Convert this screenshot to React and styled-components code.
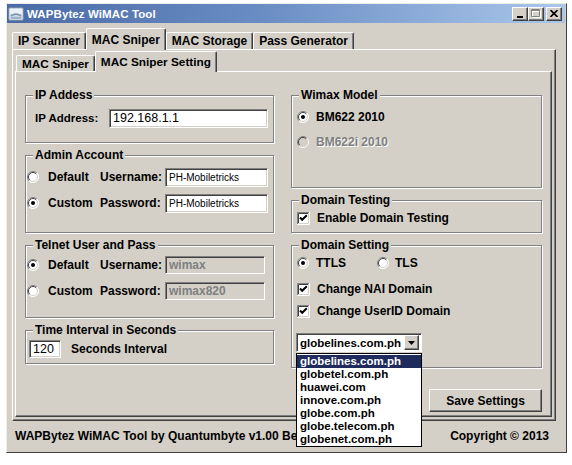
import React from "react";
import styled, { createGlobalStyle } from "styled-components";

const GlobalStyle = createGlobalStyle`
  body {
    margin: 0;
    background: #ffffff;
    font-family: "Liberation Sans", Arial, sans-serif;
    color: #000;
  }
`;

const FACE = "#d4d0c8";

// ---------- window frame ----------
const Window = styled.div`
  margin: 3px 0 0 6px;
  width: 561px;
  height: 450px;
  box-sizing: border-box;
  display: flex;
  flex-direction: column;
  background: ${FACE};
  border: 1px solid;
  border-color: #eeece6 #404040 #404040 #eeece6;
  padding: 0 1px 1px 0;
`;

const TitleBar = styled.div`
  height: 19px;
  flex-shrink: 0;
  display: flex;
  align-items: center;
  padding: 0 3px 0 1px;
  background: linear-gradient(90deg, #4a6ba6 0%, #6a8cc4 45%, #aac7ea 100%);
`;

const TitleText = styled.span`
  margin-left: 3px;
  color: #fff;
  font-weight: bold;
  font-size: 11.5px;
  letter-spacing: 0.1px;
`;

const CaptionButtons = styled.div`
  margin-left: auto;
  display: flex;
  align-items: center;
`;

const CaptionButton = styled.div`
  width: 16px;
  height: 14px;
  box-sizing: border-box;
  margin-left: ${(p) => (p.$gap ? "2px" : "0")};
  background: ${FACE};
  border: 1px solid;
  border-color: #fff #404040 #404040 #fff;
  box-shadow: inset -1px -1px 0 #808080;
  display: flex;
  align-items: center;
  justify-content: center;
`;

// ---------- tabs ----------
const Body = styled.div`
  padding: 5px 0 0 5px;
`;

const TabStrip = styled.div`
  display: flex;
  align-items: flex-end;
  height: ${(p) => (p.$inner ? "20px" : "21px")};
  padding-left: ${(p) => (p.$inner ? "1px" : "0")};
`;

const Tab = styled.div`
  position: relative;
  z-index: ${(p) => (p.$active ? 2 : 1)};
  box-sizing: border-box;
  height: ${(p) => (p.$active ? p.$tall : p.$short)}px;
  margin-bottom: ${(p) => (p.$active ? "-1px" : "0")};
  padding: 0 5px;
  display: flex;
  align-items: center;
  background: ${FACE};
  border-top: 1px solid #fff;
  border-left: 1px solid #fff;
  border-right: 1px solid #404040;
  box-shadow: inset -1px 0 0 #808080;
  border-radius: 2px 2px 0 0;
  font-weight: bold;
  font-size: ${(p) => p.$size}px;
  white-space: nowrap;
`;

const TabPanel = styled.div`
  width: 544px;
  height: 372px;
  box-sizing: border-box;
  display: flex;
  flex-direction: column;
  padding: 1px 3px 3px 2px;
  border: 1px solid;
  border-color: #fff #404040 #404040 #fff;
  box-shadow: inset -1px -1px 0 #808080;
`;

const SettingsPanel = styled.div`
  flex: 1;
  box-sizing: border-box;
  display: grid;
  grid-template-columns: 249px 251px;
  column-gap: 17px;
  align-content: start;
  padding: 16px 0 0 9px;
  border: 1px solid;
  border-color: #fff #404040 #404040 #fff;
  box-shadow: inset -1px -1px 0 #808080;
`;

const Column = styled.div`
  display: flex;
  flex-direction: column;
  gap: 5px;
`;

// ---------- group boxes ----------
const Group = styled.fieldset`
  margin: 0;
  min-width: 0;
  height: ${(p) => p.$h}px;
  box-sizing: border-box;
  padding: 0 2px;
  border: 1px solid #808080;
  box-shadow: inset 1px 1px 0 #fff, 1px 1px 0 #fff;
`;

const Legend = styled.legend`
  margin-left: 5px;
  padding: 0 2px;
  background: ${FACE};
  font-weight: bold;
  font-size: 12px;
  line-height: 14px;
`;

const Row = styled.div`
  display: flex;
  align-items: center;
  height: ${(p) => p.$h || 26}px;
  margin-top: ${(p) => p.$mt || 0}px;
  margin-left: ${(p) => p.$ml || 0}px;
`;

const Option = styled.label`
  display: flex;
  align-items: center;
  gap: ${(p) => p.$gap || 9}px;
  width: ${(p) => (p.$w ? `${p.$w}px` : "auto")};
  flex-shrink: 0;
  font-weight: bold;
  font-size: 12px;
  color: ${(p) => (p.$disabled ? "#808080" : "#000")};
  text-shadow: ${(p) => (p.$disabled ? "1px 1px 0 #fff" : "none")};
`;

const Caption = styled.span`
  width: ${(p) => p.$w}px;
  margin-left: ${(p) => p.$ml || 0}px;
  flex-shrink: 0;
  font-weight: bold;
  font-size: ${(p) => p.$size || 12}px;
`;

const Field = styled.input`
  width: ${(p) => p.$w}px;
  height: ${(p) => p.$h || 19}px;
  box-sizing: border-box;
  margin: 0;
  padding: 0 3px;
  outline: none;
  font-family: "Liberation Sans", Arial, sans-serif;
  font-size: ${(p) => p.$size || 12}px;
  font-weight: ${(p) => (p.$bold ? "bold" : "normal")};
  color: ${(p) => (p.disabled ? "#808080" : "#000")};
  background: ${(p) => (p.disabled ? FACE : "#fff")};
  border: 1px solid;
  border-color: #808080 #fff #fff #808080;
  box-shadow: inset 1px 1px 0 #404040, inset -1px -1px 0 ${FACE};
`;

const Button = styled.div`
  align-self: flex-end;
  width: 113px;
  height: 23px;
  margin-top: 16px;
  box-sizing: border-box;
  display: flex;
  align-items: center;
  justify-content: center;
  border: 1px solid;
  border-color: #fff #404040 #404040 #fff;
  box-shadow: inset -1px -1px 0 #808080;
  font-weight: bold;
  font-size: 12px;
`;

// ---------- combo box ----------
const ComboWrap = styled.div`
  position: relative;
  margin: 11px 0 0 2px;
  width: 126px;
`;

const Combo = styled.div`
  height: 19px;
  box-sizing: border-box;
  display: flex;
  align-items: center;
  background: #fff;
  border: 1px solid;
  border-color: #808080 #fff #fff #808080;
  box-shadow: inset 1px 1px 0 #404040;
  padding: 2px 2px 2px 3px;
  font-weight: bold;
  font-size: 11.5px;
`;

const ComboText = styled.span`
  flex: 1;
  white-space: nowrap;
  overflow: hidden;
`;

const ComboArrow = styled.span`
  width: 15px;
  height: 15px;
  flex-shrink: 0;
  box-sizing: border-box;
  display: flex;
  align-items: center;
  justify-content: center;
  background: ${FACE};
  border: 1px solid;
  border-color: #fff #404040 #404040 #fff;
  box-shadow: inset -1px -1px 0 #808080;
`;

const DropList = styled.ul`
  position: absolute;
  z-index: 10;
  top: calc(100% + 1px);
  left: 0;
  width: 126px;
  box-sizing: border-box;
  margin: 0;
  padding: 1px 0 0;
  list-style: none;
  background: #fff;
  border: 1px solid #000;
`;

const DropItem = styled.li`
  height: 13px;
  line-height: 13px;
  padding-left: 3px;
  font-weight: bold;
  font-size: 11.5px;
  color: ${(p) => (p.$selected ? "#fff" : "#000")};
  background: ${(p) => (p.$selected ? "#1e2b5c" : "transparent")};
`;

const StatusBar = styled.div`
  flex: 1;
  display: flex;
  align-items: center;
  justify-content: space-between;
  padding: 0 16px 0 8px;
  font-weight: bold;
  font-size: 12px;
  white-space: nowrap;
`;

// ---------- small drawings ----------
function AppIcon() {
  return (
    <svg width="16" height="16" viewBox="0 0 16 16">
      <rect x="0.5" y="1.5" width="15" height="13" rx="2" fill="#c9d5e2" stroke="#6f86a3" />
      <rect x="2" y="3" width="12" height="5" fill="#eaf1f8" />
      <path d="M3 10 Q8 6 13 10" stroke="#7a8fa8" strokeWidth="1.5" fill="none" />
      <rect x="3" y="11" width="10" height="2" fill="#9fb2c8" />
    </svg>
  );
}

function Radio({ on, disabled }) {
  return (
    <svg width="12" height="12" viewBox="0 0 12 12" style={{ flexShrink: 0 }}>
      <circle cx="6" cy="6" r="5.5" fill={disabled ? FACE : "#fff"} />
      <path d="M2.1 9.9 A5.5 5.5 0 0 1 9.9 2.1" stroke="#808080" fill="none" />
      <path d="M9.9 2.1 A5.5 5.5 0 0 1 2.1 9.9" stroke="#fff" fill="none" />
      <path d="M2.8 9.2 A4.5 4.5 0 0 1 9.2 2.8" stroke="#404040" fill="none" />
      <path d="M9.2 2.8 A4.5 4.5 0 0 1 2.8 9.2" stroke={FACE} fill="none" />
      {on && <circle cx="6" cy="6" r="2" fill="#000" />}
    </svg>
  );
}

function Check({ on }) {
  return (
    <svg width="13" height="13" viewBox="0 0 13 13" style={{ flexShrink: 0 }}>
      <rect x="1" y="1" width="11" height="11" fill="#fff" />
      <path d="M0.5 12 V0.5 H12" stroke="#808080" fill="none" />
      <path d="M1.5 11 V1.5 H11" stroke="#404040" fill="none" />
      <path d="M0 12.5 H12.5 V0" stroke="#fff" fill="none" />
      <path d="M1 11.5 H11.5 V1" stroke={FACE} fill="none" />
      {on && <path d="M3 5.5 L5.2 7.8 L9.8 3.2" stroke="#000" strokeWidth="2" fill="none" />}
    </svg>
  );
}

const topTabs = ["IP Scanner", "MAC Sniper", "MAC Storage", "Pass Generator"];
const domains = [
  "globelines.com.ph",
  "globetel.com.ph",
  "huawei.com",
  "innove.com.ph",
  "globe.com.ph",
  "globe.telecom.ph",
  "globenet.com.ph",
];

function AccountRows({ user, pass, userOn, disabled }) {
  const fieldProps = disabled
    ? { disabled: true, $w: 100, $h: 18, $size: 12, $bold: true }
    : { $w: 103, $h: 19, $size: 10 };
  return (
    <>
      <Row $mt={disabled ? 0 : 2} $ml={-1}>
        <Option $w={73}>
          <Radio on={userOn} />
          Default
        </Option>
        <Caption $w={65}>Username:</Caption>
        <Field readOnly defaultValue={user} {...fieldProps} />
      </Row>
      <Row $ml={-1}>
        <Option $w={73}>
          <Radio on={!userOn} />
          Custom
        </Option>
        <Caption $w={65}>Password:</Caption>
        <Field readOnly defaultValue={pass} {...fieldProps} />
      </Row>
    </>
  );
}

export default function App() {
  return (
    <>
      <GlobalStyle />
      <Window>
        <TitleBar>
          <AppIcon />
          <TitleText>WAPBytez WiMAC Tool</TitleText>
          <CaptionButtons>
            <CaptionButton>
              <svg width="8" height="8" viewBox="0 0 8 8">
                <rect x="1" y="6" width="6" height="2" fill="#000" />
              </svg>
            </CaptionButton>
            <CaptionButton>
              <svg width="10" height="9" viewBox="0 0 10 9">
                <path d="M1.5 1.5 H9.5 V8.5 H1.5 Z M1.5 2.5 H9.5" stroke="#fff" fill="none" />
                <path d="M0.5 0.5 H8.5 V7.5 H0.5 Z M0.5 1.5 H8.5" stroke="#808080" fill="none" />
              </svg>
            </CaptionButton>
            <CaptionButton $gap>
              <svg width="8" height="7" viewBox="0 0 8 7">
                <path d="M0.5 0 L7.5 7 M7.5 0 L0.5 7" stroke="#000" strokeWidth="1.6" />
              </svg>
            </CaptionButton>
          </CaptionButtons>
        </TitleBar>

        <Body>
          <TabStrip>
            {topTabs.map((t) => (
              <Tab key={t} $active={t === "MAC Sniper"} $tall={22} $short={17} $size={12}>
                {t}
              </Tab>
            ))}
          </TabStrip>

          <TabPanel>
            <TabStrip $inner>
              <Tab $tall={21} $short={16} $size={11.8}>MAC Sniper</Tab>
              <Tab $active $tall={21} $short={16} $size={11.8}>MAC Sniper Setting</Tab>
            </TabStrip>

            <SettingsPanel>
              <Column>
                <Group $h={55}>
                  <Legend>IP Addess</Legend>
                  <Row $mt={3} $ml={7}>
                    <Caption $w={74} $size={11.5}>IP Address:</Caption>
                    <Field readOnly defaultValue="192.168.1.1" $w={159} $size={12.5} />
                  </Row>
                </Group>

                <Group $h={85}>
                  <Legend>Admin Account</Legend>
                  <AccountRows user="PH-Mobiletricks" pass="PH-Mobiletricks" userOn={false} />
                </Group>

                <Group $h={80}>
                  <Legend>Telnet User and Pass</Legend>
                  <AccountRows user="wimax" pass="wimax820" userOn disabled />
                </Group>

                <Group $h={41}>
                  <Legend>Time Interval in Seconds</Legend>
                  <Row $h={22} $mt={1} $ml={1}>
                    <Field readOnly defaultValue="120" $w={32} $h={18} $size={12.5} />
                    <Caption $w={120} $ml={10}>Seconds Interval</Caption>
                  </Row>
                </Group>
              </Column>

              <Column>
                <Group $h={100}>
                  <Legend>Wimax Model</Legend>
                  <Row $h={25} $mt={2} $ml={3}>
                    <Option $gap={7}>
                      <Radio on />
                      BM622 2010
                    </Option>
                  </Row>
                  <Row $h={25} $ml={3}>
                    <Option $gap={7} $disabled>
                      <Radio disabled />
                      BM622i 2010
                    </Option>
                  </Row>
                </Group>

                <Group $h={40}>
                  <Legend>Domain Testing</Legend>
                  <Row $h={20} $mt={1} $ml={3}>
                    <Option $gap={7}>
                      <Check on />
                      Enable Domain Testing
                    </Option>
                  </Row>
                </Group>

                <Group $h={130}>
                  <Legend>Domain Setting</Legend>
                  <Row $h={22} $ml={3}>
                    <Option $gap={7} $w={80}>
                      <Radio on />
                      TTLS
                    </Option>
                    <Option $gap={6}>
                      <Radio />
                      TLS
                    </Option>
                  </Row>
                  <Row $h={22} $mt={4} $ml={3}>
                    <Option $gap={7}>
                      <Check on />
                      Change NAI Domain
                    </Option>
                  </Row>
                  <Row $h={22} $ml={3}>
                    <Option $gap={7}>
                      <Check on />
                      Change UserID Domain
                    </Option>
                  </Row>
                  <ComboWrap>
                    <Combo>
                      <ComboText>globelines.com.ph</ComboText>
                      <ComboArrow>
                        <svg width="7" height="4" viewBox="0 0 7 4">
                          <path d="M0 0 H7 L3.5 4 Z" fill="#000" />
                        </svg>
                      </ComboArrow>
                    </Combo>
                    <DropList>
                      {domains.map((d, i) => (
                        <DropItem key={d} $selected={i === 0}>
                          {d}
                        </DropItem>
                      ))}
                    </DropList>
                  </ComboWrap>
                </Group>

                <Button>Save Settings</Button>
              </Column>
            </SettingsPanel>
          </TabPanel>
        </Body>

        <StatusBar>
          <span>WAPBytez WiMAC Tool by Quantumbyte v1.00 Beta</span>
          <span>Copyright © 2013</span>
        </StatusBar>
      </Window>
    </>
  );
}
